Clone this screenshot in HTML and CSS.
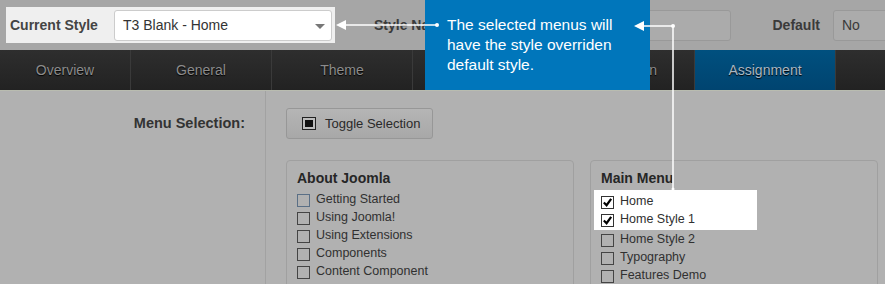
FILE: index.html
```html
<!DOCTYPE html>
<html lang="en">
<head>
    <meta charset="UTF-8">
    <meta name="viewport" content="width=device-width, initial-scale=1.0">
    <title>T3 Assignment</title>
    <link rel="stylesheet" href="styles.css">
</head>
<body>

<div class="page">
    <div class="toolbar">
        <div class="spot-style">
            <label class="bar-label">Current Style</label>
            <div class="select select-style">T3 Blank - Home<span class="caret"></span></div>
        </div>
        <label class="bar-label name-label">Style Name</label>
        <div class="input-name"></div>
        <label class="bar-label default-label">Default</label>
        <div class="select select-default">No</div>
    </div>

    <div class="tabs">
        <div class="tab first">Overview</div>
        <div class="tab">General</div>
        <div class="tab">Theme</div>
        <div class="tab">Layout</div>
        <div class="tab">Navigation</div>
        <div class="tab active">Assignment</div>
        <div class="tab rest"></div>
    </div>

    <div class="content">
        <div class="side">Menu Selection:</div>
        <div class="main">
            <button class="toggle"><span class="toggle-icon"><span></span></span>Toggle Selection</button>

            <div class="panels">
                <div class="panel">
                    <h3>About Joomla</h3>
                    <div class="item"><span class="box focus"></span>Getting Started</div>
                    <div class="item"><span class="box"></span>Using Joomla!</div>
                    <div class="item"><span class="box"></span>Using Extensions</div>
                    <div class="item"><span class="box"></span>Components</div>
                    <div class="item"><span class="box"></span>Content Component</div>
                </div>
                <div class="panel">
                    <h3>Main Menu</h3>
                    <div class="spot-items">
                        <div class="item"><span class="box checked"><svg viewBox="0 0 12 12" width="11" height="11"><path d="M2 6 L5 9 L10 2" fill="none" stroke="#000" stroke-width="2.4"/></svg></span>Home</div>
                        <div class="item"><span class="box checked"><svg viewBox="0 0 12 12" width="11" height="11"><path d="M2 6 L5 9 L10 2" fill="none" stroke="#000" stroke-width="2.4"/></svg></span>Home Style 1</div>
                    </div>
                    <div class="item"><span class="box"></span>Home Style 2</div>
                    <div class="item"><span class="box"></span>Typography</div>
                    <div class="item"><span class="box"></span>Features Demo</div>
                </div>
            </div>
        </div>
    </div>

    <div class="callout">The selected menus will have the style overriden default style.</div>

    <!-- pointer lines of the callout -->
    <svg class="pointers" width="885" height="284" viewBox="0 0 885 284">
        <polygon points="336,25 346,20 346,30" fill="#fff"/>
        <line x1="344" y1="25" x2="437" y2="25" stroke="#fff" stroke-width="1.5"/>
        <circle cx="437" cy="25" r="2" fill="#fff"/>
        <polygon points="634,26 644,21 644,31" fill="#fff"/>
        <line x1="642" y1="26" x2="673" y2="26" stroke="#fff" stroke-width="1.5"/>
        <circle cx="673" cy="26" r="2" fill="#fff"/>
        <line x1="673" y1="26" x2="673" y2="190" stroke="#fff" stroke-width="1.5"/>
        <circle cx="673" cy="189" r="1.5" fill="#fff"/>
    </svg>
</div>

</body>
</html>
```

FILE: styles.css
```css
body {
    margin: 0;
    font-family: "Liberation Sans", Arial, sans-serif;
    background-color: #b1b1b1;
}
.page {
    position: relative;
    width: 885px;
    height: 284px;
    overflow: hidden;
}
.toolbar {
    display: flex;
    align-items: center;
    height: 50px;
    background-color: #a6a6a6;
}
.spot-style {
    flex: none;
    display: flex;
    align-items: center;
    width: 325px;
    height: 36px;
    margin-left: 6px;
    padding-left: 4px;
    background-color: #efefef;
}
.bar-label {
    flex: none;
    white-space: nowrap;
    font-size: 14px;
    font-weight: bold;
    color: #3a3a3a;
}
.spot-style .bar-label {
    width: 104px;
    color: #444;
}
.select {
    flex: none;
    position: relative;
    box-sizing: border-box;
    height: 31px;
    line-height: 29px;
    padding-left: 8px;
    font-size: 14px;
    border: 1px solid #ccc;
    border-radius: 3px;
}
.select-style {
    width: 218px;
    color: #333;
    background-color: #fff;
}
.caret {
    position: absolute;
    right: 6px;
    top: 13px;
    border-left: 5px solid transparent;
    border-right: 5px solid transparent;
    border-top: 5px solid #777;
}
.name-label {
    margin-left: 39px;
}
.input-name {
    flex: none;
    box-sizing: border-box;
    width: 272px;
    height: 31px;
    margin-left: 10px;
    background-color: #ababab;
    border: 1px solid #999;
    border-radius: 3px;
}
.default-label {
    margin-left: 41px;
}
.select-default {
    width: 60px;
    margin-left: 13px;
    color: #3a3a3a;
    background-color: #ababab;
    border-color: #999;
}
.tabs {
    display: flex;
    height: 40px;
    background: linear-gradient(#2e2e2e, #222);
    border-bottom: 1px solid #b9bcb0;
}
.tab {
    flex: none;
    width: 140px;
    line-height: 40px;
    text-align: center;
    font-size: 14px;
    color: #8c8c8c;
    text-shadow: 0 1px 1px #000;
    border-right: 1px solid #3a3a3a;
}
.tab.first {
    width: 130px;
}
.tab.active {
    color: #a9b6c2;
    background: linear-gradient(#00507f, #004470);
}
.tab.rest {
    width: 60px;
    border-right: none;
}
.content {
    display: flex;
    height: 200px;
}
.side {
    box-sizing: border-box;
    width: 266px;
    padding: 24px 20px 0 0;
    text-align: right;
    font-size: 14.5px;
    font-weight: bold;
    color: #333;
    border-right: 1px solid #a2a2a2;
}
.main {
    padding: 17px 0 0 20px;
}
.toggle {
    display: flex;
    align-items: center;
    box-sizing: border-box;
    width: 147px;
    height: 31px;
    padding: 0 0 0 15px;
    font-family: "Liberation Sans", Arial, sans-serif;
    font-size: 13px;
    color: #2a2a2a;
    background: linear-gradient(#b5b5b5, #a8a8a8);
    border: 1px solid #979797;
    border-radius: 3px;
}
.toggle-icon {
    display: flex;
    align-items: center;
    justify-content: center;
    box-sizing: border-box;
    width: 14px;
    height: 13px;
    margin-right: 9px;
    border: 1px solid #222;
    background-color: #bdbdbd;
}
.toggle-icon span {
    width: 8px;
    height: 7px;
    background-color: #111;
}
.panels {
    display: flex;
    gap: 16px;
    margin-top: 21px;
}
.panel {
    box-sizing: border-box;
    width: 288px;
    height: 140px;
    padding: 9px 0 0 10px;
    border: 1px solid #a0a0a0;
    border-radius: 4px;
}
.panel h3 {
    margin: 0 0 4px;
    font-size: 14px;
    color: #262626;
}
.item {
    display: flex;
    align-items: center;
    height: 18px;
    font-size: 12.5px;
    color: #303030;
}
.box {
    display: flex;
    align-items: center;
    justify-content: center;
    box-sizing: border-box;
    width: 13px;
    height: 13px;
    margin: 3px 6px 0 0;
    border: 1px solid #444;
}
.box.focus {
    border-color: #5a6f86;
}
.box.checked {
    background-color: #fff;
    border-color: #333;
}
.spot-items {
    width: 156px;
    margin: 0 0 0 -7px;
    padding: 2px 0 2px 7px;
    background-color: #fff;
}
.callout {
    position: absolute;
    left: 425px;
    top: 0;
    box-sizing: border-box;
    width: 225px;
    height: 90px;
    padding: 15px 20px 0 22px;
    font-size: 15.5px;
    line-height: 20px;
    color: #fff;
    background-color: #0076bb;
}
.pointers {
    position: absolute;
    left: 0;
    top: 0;
    pointer-events: none;
}
```
